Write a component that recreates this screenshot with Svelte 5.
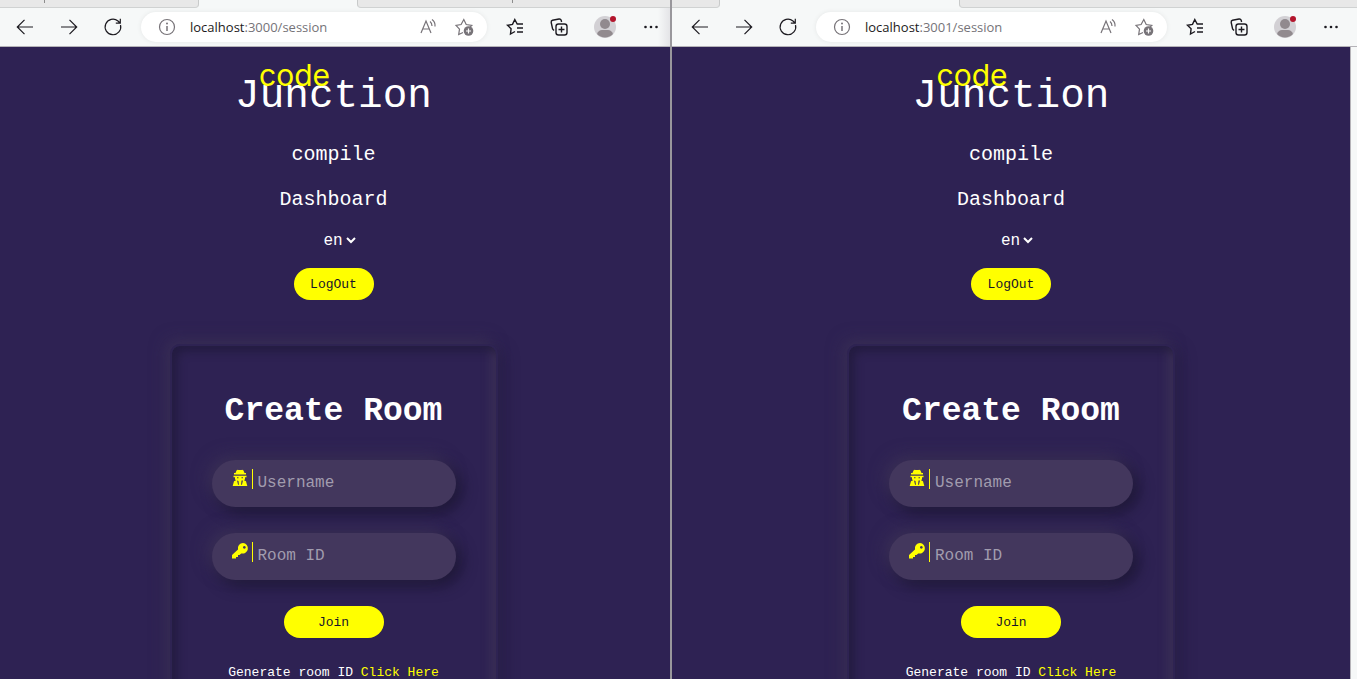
<script>
  const panes = [
    { id: 'first', port: '3000', before: 199, active: 158, after: 313 },
    { id: 'second', port: '3001', before: 47, active: 240, after: 398 }
  ];
</script>

<main class="desktop">
  {#each panes as pane (pane.id)}
    <section class="window {pane.id}">
      <div class="tabs">
        <span class="tab left" style="flex-grow: {pane.before}"></span>
        <span class="active" style="flex-grow: {pane.active}"></span>
        <span class="tab right" style="flex-grow: {pane.after}"></span>
      </div>

      <div class="toolbar">
        <button class="tool" aria-label="Back">
          <svg width="20" height="20" viewBox="0 0 20 20"><path d="M18 10H2.500M9.500 2.800 2.300 10l7.200 7.200" /></svg>
        </button>
        <button class="tool" aria-label="Forward">
          <svg width="20" height="20" viewBox="0 0 20 20"><path d="M2 10h15.500M10.500 2.800 17.700 10l-7.200 7.200" /></svg>
        </button>
        <button class="tool" aria-label="Refresh">
          <svg width="20" height="20" viewBox="0 0 20 20"><path d="M17.500 8A7.800 7.800 0 1 1 15 4l2 2M17.300 1.800v4.400h-4.500" /></svg>
        </button>

        <div class="address">
          <button class="tool info" aria-label="Site information">
            <svg width="20" height="20" viewBox="0 0 20 20"><circle cx="10" cy="10" r="7.500" /><path d="M10 9v5" stroke-width="1.500" /><circle class="solid" cx="10" cy="6.500" r="1" /></svg>
          </button>
          <button class="url"><b>localhost</b>:{pane.port}/session</button>
          <button class="tool muted" aria-label="Read aloud">
            <svg width="20" height="20" viewBox="0 0 20 20"><path d="M3 16 8 4l5 12M4.700 12h6.600M12 4.500q2 1.500 2 4.500M14 2.500q3.500 2.500 3 7" /></svg>
          </button>
          <button class="tool muted" aria-label="Add to favorites">
            <svg width="20" height="20" viewBox="0 0 20 20"><path d="M9 15.500l-4.300 2 .8-5.300L2 8.300l5.100-.8L9.800 2.500l2.400 5 5.600.8-2 2" /><circle class="solid" cx="14.500" cy="14" r="4.800" /><path class="cut" d="M14.500 11.500v5M12 14h5" /></svg>
          </button>
        </div>

        <button class="tool dark" aria-label="Favorites">
          <svg width="20" height="20" viewBox="0 0 20 20"><path d="M10 14.500 5.500 17l.6-5.300L2.500 8.300l5-.9L9.800 2.500 12.200 7H18M12 11H18M12 15H18" /></svg>
        </button>
        <button class="tool dark" aria-label="Collections">
          <svg width="20" height="20" viewBox="0 0 20 20"><path d="M5 13.500 3.600 12 2.200 5.500q-.3-1.800 1.300-2.200L10 2q1.700-.2 2.200 1.200l.4 1.800" /><rect x="7" y="7" width="11" height="11" rx="2.500" /><path d="M12.500 9.500v6M9.500 12.500h6" /></svg>
        </button>
        <button class="tool avatar" aria-label="Profile">
          <svg width="26" height="26" viewBox="0 0 26 26"><circle cx="13" cy="13" r="11" fill="#d2d0d4" stroke="none" /><circle cx="13" cy="10" r="5" fill="#918a8e" stroke="none" /><path d="M5 20q1.500-4 5-4h6q3.500 0 5 4a11 11 0 0 1-16 0z" fill="#918a8e" stroke="none" /><circle cx="21" cy="5" r="3" fill="#b3152d" stroke="none" /></svg>
        </button>
        <button class="tool" aria-label="More">
          <svg width="20" height="20" viewBox="0 0 20 20"><circle class="solid" cx="4.500" cy="10" r="1.300" /><circle class="solid" cx="10" cy="10" r="1.300" /><circle class="solid" cx="15.500" cy="10" r="1.300" /></svg>
        </button>
      </div>

      <div class="page">
        <header>
          <h1 class="logo">Junction<span>code</span></h1>
          <nav>
            <a href="#compile">compile</a>
            <a href="#dashboard">Dashboard</a>
          </nav>
          <div class="language">
            <select aria-label="Language"><option>en</option></select>
            <svg width="10" height="8" viewBox="0 0 10 8"><path d="M1 1l4 4 4-4" /></svg>
          </div>
          <button class="pill">LogOut</button>
        </header>

        <form class="card" onsubmit={(e) => e.preventDefault()}>
          <h2>Create Room</h2>
          <div class="field">
            <label for="user-{pane.id}" aria-label="Username">
              <svg width="16" height="18" viewBox="0 0 16 18"><path fill-rule="evenodd" d="M4.500 1.500Q5.500 .5 6.500 1h3q1-.5 2 .5l1 2.500h1.500v1.500H2V4h1.500zM1.500 6.700h13v1.600H13v2l-1 1 2 1 1.300 4.700H.7L2 12.300l2-1-1-1v-2H1.500zM5 8.300v1h1.500v-1zM9.500 8.300v1H11v-1zM5 11.500l1 4 1 .5-.5-4zM9.500 11.500 9 16l1-.5 1-4z" /></svg>
            </label>
            <input id="user-{pane.id}" type="text" placeholder="Username" />
          </div>
          <div class="field">
            <label for="room-{pane.id}" aria-label="Room ID">
              <svg width="18" height="18" viewBox="0 0 18 18"><path fill-rule="evenodd" d="M12 1a5.300 5.300 0 1 1-1.800 10.400L8.500 13H7v2H5v1.500H1V13l6-5.500A5.300 5.300 0 0 1 12 1zm1.300 2.900a1.400 1.400 0 1 0 .1 0z" /></svg>
            </label>
            <input id="room-{pane.id}" type="text" placeholder="Room ID" />
          </div>
          <button class="pill join">Join</button>
          <p>Generate room ID <a href="#generate">Click Here</a></p>
        </form>
      </div>
    </section>
  {/each}
</main>

<style>
  :global(body) {
    margin: 0;
    background: #f6f8f8;
  }
  * {
    box-sizing: border-box;
  }
  button {
    border: 0;
    padding: 0;
    background: none;
    font: inherit;
    color: inherit;
  }
  .desktop {
    display: grid;
    grid-template-columns: 672fr 685fr;
    height: 100vh;
    overflow: hidden;
  }
  .window {
    display: flex;
    flex-direction: column;
    min-width: 0;
    min-height: 0;
    background: #f6f8f8;
  }
  .first {
    border-right: 2px solid #99979c;
  }
  .tabs {
    display: flex;
    height: 8px;
    flex: none;
  }
  .tab {
    background: #e8e8e8;
    border-bottom: 1px solid #d0d2d2;
  }
  .tab.left {
    border-right: 1px solid #c8caca;
    border-bottom-right-radius: 4px;
  }
  .tab.right {
    border-left: 1px solid #c8caca;
    border-bottom-left-radius: 4px;
  }
  .first .tab {
    background-image: linear-gradient(#8c8c8c, #8c8c8c);
    background-repeat: no-repeat;
    background-size: 1px 3px;
  }
  .first .tab.left {
    background-position: 44px 0;
  }
  .first .tab.right {
    background-position: 154px 0;
  }
  .toolbar {
    display: flex;
    align-items: center;
    gap: 12px;
    flex: none;
    height: 39px;
    padding: 0 3px 0 9px;
    border-bottom: 1px solid #b5b3b8;
    color: #1c1a20;
  }
  .first .toolbar {
    background: linear-gradient(to left, #e4e4e7, #f6f8f8 12px);
  }
  .second .toolbar {
    padding: 0 10px 0 12px;
  }
  .tool {
    display: flex;
    align-items: center;
    justify-content: center;
    flex: none;
    width: 32px;
    height: 30px;
  }
  .tool.avatar {
    width: 36px;
  }
  .tool svg {
    fill: none;
    stroke: currentColor;
    stroke-width: 1.2;
  }
  .tool.dark svg {
    stroke-width: 1.4;
  }
  .tool .solid {
    fill: currentColor;
    stroke: none;
  }
  .tool .cut {
    stroke: #fff;
  }
  .address {
    display: flex;
    align-items: center;
    flex: 1;
    min-width: 0;
    height: 30px;
    padding: 0 7px 0 10px;
    border-radius: 15px;
    background: #fff;
    box-shadow: 0 0 4px #e4e6e6;
    gap: 4px;
  }
  .info,
  .muted {
    color: #777378;
  }
  .url {
    flex: 1;
    padding-left: 3px;
    text-align: left;
    font: 13px/20px "Open Sans", sans-serif;
    color: #757378;
  }
  .url b {
    font-weight: 400;
    color: #1c1a20;
  }
  .page {
    flex: 1;
    min-height: 0;
    overflow: hidden;
    padding: 25px 3px 0 0;
    background: #2e2253;
    color: #fff;
    font-family: "Liberation Mono", monospace;
  }
  .second .page {
    margin-right: 6px;
    padding-right: 0;
    border-right: 1px solid #b5b3b8;
  }
  header {
    display: flex;
    flex-direction: column;
    align-items: center;
  }
  .logo {
    position: relative;
    margin: 0;
    font-size: 41px;
    line-height: 48px;
    font-weight: 400;
  }
  .logo span {
    position: absolute;
    left: 24px;
    top: -15px;
    font: 30px/36px Inter, sans-serif;
    color: #ff0;
  }
  nav {
    display: flex;
    flex-direction: column;
    align-items: center;
    gap: 21px;
    margin-top: 23px;
  }
  nav a {
    font-size: 20px;
    line-height: 24px;
    color: #fff;
    text-decoration: none;
  }
  .language {
    display: flex;
    align-items: center;
    gap: 2px;
    margin: 19px 0 17px 12px;
  }
  select {
    appearance: none;
    border: 0;
    padding: 0;
    background: none;
    color: #fff;
    font: 16px/20px "Liberation Mono", monospace;
  }
  .language svg {
    fill: none;
    stroke: #fff;
    stroke-width: 2;
    pointer-events: none;
  }
  .pill {
    height: 32px;
    min-width: 80px;
    padding: 0 16px;
    border-radius: 16px;
    background: #ff0;
    color: #17132b;
    font-size: 13px;
  }
  .card {
    display: flex;
    flex-direction: column;
    align-items: center;
    width: calc(100% - 32px);
    max-width: 328px;
    height: 440px;
    margin: 44px auto 0;
    padding: 45px 40px 40px;
    border: 2px solid #2e2352;
    border-radius: 10px;
    box-shadow:
      -5px -5px 15px #44395a80,
      5px 5px 15px #1e173a80,
      inset 5px 5px 10px #1f1838b0,
      inset -5px -5px 10px #44395aa0;
  }
  h2 {
    margin: 0 0 27px;
    font-size: 33px;
    line-height: 42px;
    white-space: nowrap;
  }
  .field {
    display: flex;
    align-items: flex-start;
    width: 100%;
    height: 47px;
    margin-bottom: 26px;
    padding: 9px 16px 0 19px;
    border-radius: 24px;
    background: #43375d;
    box-shadow:
      -5px -5px 15px #44395a90,
      5px 5px 15px #1c1635;
  }
  label {
    display: flex;
    justify-content: center;
    flex: none;
    width: 22px;
    height: 20px;
    padding-right: 3px;
    border-right: 1px solid #ff0;
  }
  label svg {
    fill: #ff0;
    flex: none;
  }
  input {
    flex: 1;
    min-width: 0;
    height: 28px;
    border: 0;
    padding: 0 0 0 5px;
    background: none;
    color: #fff;
    outline: 0;
    font: 16px/20px "Liberation Mono", monospace;
  }
  input::placeholder {
    color: #a19cae;
  }
  .join {
    width: 100px;
    flex: none;
  }
  p {
    margin: 25px 0 0;
    font-size: 13px;
    line-height: 20px;
    white-space: nowrap;
  }
  p a {
    color: #ff0;
    text-decoration: none;
  }
</style>
